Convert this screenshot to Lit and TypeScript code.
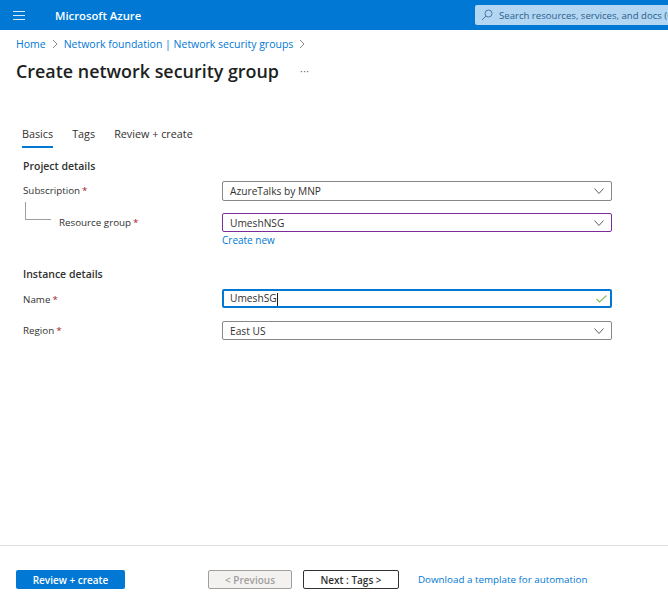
import { LitElement, html, css, svg } from 'lit';
import { customElement } from 'lit/decorators.js';

const chevronDown = svg`<path d="M.5 .5 L5 5.5 L9.5 .5" fill="none" stroke="#605e5c" stroke-width="1"/>`;
const crumbChevron = svg`<path d="M1 1 L5 5 L1 9" fill="none" stroke="#8a8886" stroke-width="1"/>`;

@customElement('app-root')
export class AppRoot extends LitElement {
    static styles = css`
        :host {
            display: flex;
            flex-direction: column;
            height: 600px;
            background: #fff;
            color: #323130;
            font-family: 'Open Sans', 'Noto Sans', sans-serif;
            font-size: 10.5px;
            overflow: hidden;
        }

        .topbar {
            display: flex;
            align-items: center;
            height: 30px;
            flex: none;
            background: #0078d4;
            color: #fff;
        }

        .menu {
            display: flex;
            margin-left: 13px;
            width: 12px;
        }

        .brand {
            margin-left: 30px;
            font-size: 11.3px;
            font-weight: 600;
            white-space: nowrap;
        }

        .search {
            display: flex;
            align-items: center;
            gap: 6px;
            margin-left: auto;
            width: 193px;
            height: 20px;
            padding-left: 6px;
            box-sizing: border-box;
            background: #b3d6f2;
            border-radius: 2px 0 0 2px;
            color: #2c5f8d;
            font-size: 9.6px;
            white-space: nowrap;
            overflow: hidden;
        }

        .search svg {
            flex: none;
        }

        .crumbs {
            display: flex;
            align-items: center;
            gap: 6px;
            margin: 6px 0 0 16px;
            height: 16px;
            color: #0078d4;
            white-space: nowrap;
        }

        .title-row {
            display: flex;
            align-items: center;
            margin: 6px 0 0 16px;
            height: 26px;
        }

        h1 {
            margin: 0;
            font-size: 17.9px;
            font-weight: 600;
            color: #201f1e;
            white-space: nowrap;
        }

        .more {
            margin-left: 21px;
            font-size: 10px;
            color: #605e5c;
            letter-spacing: 0.5px;
        }

        .tabs {
            display: flex;
            gap: 19px;
            margin: 43px 0 0 22px;
            height: 21px;
            font-size: 10.8px;
        }

        .tab {
            height: 19px;
            line-height: 14px;
            white-space: nowrap;
        }

        .tab.active {
            border-bottom: 2px solid #0078d4;
        }

        .form {
            flex: 1;
            margin-left: 23px;
            width: 589px;
        }

        h2 {
            margin: 0;
            font-size: 10.5px;
            font-weight: 600;
            line-height: 16px;
        }

        .section-one {
            margin-top: 10px;
        }

        .section-two {
            margin-top: 19px;
        }

        .row {
            display: grid;
            grid-template-columns: 199px 390px;
            align-items: center;
        }

        .row.first {
            margin-top: 7px;
        }

        .row.gap {
            margin-top: 12px;
        }

        .row.wide-gap {
            margin-top: 13px;
        }

        .label {
            display: flex;
            align-items: center;
            font-size: 9.8px;
            white-space: nowrap;
        }

        .label.raised {
            padding-bottom: 2px;
        }

        .label.lowered {
            padding-top: 2px;
        }

        .label b {
            margin-left: 2px;
            font-weight: 400;
            color: #a4262c;
        }

        .elbow {
            width: 26px;
            height: 18px;
            margin: -18px 8px 5px 2px;
            border-left: 1px solid #a19f9d;
            border-bottom: 1px solid #a19f9d;
            box-sizing: border-box;
        }

        .field {
            display: flex;
            align-items: center;
            justify-content: space-between;
            height: 19px;
            padding: 0 7px;
            box-sizing: border-box;
            border: 1px solid #8a8886;
            border-radius: 2px;
            background: #fff;
            font-size: 10.2px;
        }

        .field.tall {
            height: 20px;
        }

        .field.purple {
            border-color: #7b2e9b;
        }

        .field.focus {
            border: 2px solid #0078d4;
            padding: 0 3px 0 6px;
        }

        .caret {
            display: inline-block;
            width: 1px;
            height: 13px;
            background: #201f1e;
            vertical-align: middle;
        }

        .create {
            margin: 1px 0 0 199px;
            line-height: 14px;
            color: #0078d4;
            font-size: 10px;
        }

        .footer {
            display: flex;
            align-items: flex-start;
            flex: none;
            height: 55px;
            padding: 24px 0 0 16px;
            box-sizing: border-box;
            border-top: 1px solid #e1dfdd;
        }

        .btn {
            display: flex;
            align-items: center;
            justify-content: center;
            height: 19px;
            box-sizing: border-box;
            border-radius: 2px;
            white-space: nowrap;
            font-size: 10px;
            font-weight: 600;
        }

        .btn.primary {
            width: 109px;
            background: #0078d4;
            color: #fff;
        }

        .btn.disabled {
            width: 84px;
            margin-left: 83px;
            background: #f3f2f1;
            border: 1px solid #a19f9d;
            color: #a19f9d;
        }

        .btn.outline {
            width: 96px;
            margin-left: 11px;
            border: 1px solid #323130;
            color: #323130;
        }

        .link {
            margin-left: 19px;
            color: #0078d4;
            font-size: 9.8px;
            line-height: 19px;
            white-space: nowrap;
        }
    `;

    private _select(value: string, extra = '') {
        return html`
            <div class="field ${extra}">
                <span>${value}</span>
                <svg width="10" height="6" viewBox="0 0 10 6">${chevronDown}</svg>
            </div>
        `;
    }

    render() {
        return html`
            <header class="topbar">
                <div class="menu">
                    <svg width="12" height="9" viewBox="0 0 12 9">
                        <path d="M0 .5H12M0 4.5H12M0 8.5H12" stroke="#fff" stroke-width="1" opacity="0.85"/>
                    </svg>
                </div>
                <div class="brand">Microsoft Azure</div>
                <div class="search">
                    <svg width="12" height="12" viewBox="0 0 12 12">
                        <circle cx="7.5" cy="4.5" r="3.5" fill="none" stroke="#4a7ba6" stroke-width="1"/>
                        <path d="M5 7L1 11" stroke="#4a7ba6" stroke-width="1"/>
                    </svg>
                    <span>Search resources, services, and docs (G+/)</span>
                </div>
            </header>

            <nav class="crumbs">
                <span>Home</span>
                <svg width="6" height="10" viewBox="0 0 6 10">${crumbChevron}</svg>
                <span>Network foundation | Network security groups</span>
                <svg width="6" height="10" viewBox="0 0 6 10">${crumbChevron}</svg>
            </nav>

            <div class="title-row">
                <h1>Create network security group</h1>
                <span class="more">···</span>
            </div>

            <div class="tabs">
                <div class="tab active">Basics</div>
                <div class="tab">Tags</div>
                <div class="tab">Review + create</div>
            </div>

            <main class="form">
                <h2 class="section-one">Project details</h2>
                <div class="row first">
                    <div class="label raised">Subscription<b>*</b></div>
                    ${this._select('AzureTalks by MNP', 'tall')}
                </div>
                <div class="row gap">
                    <div class="label">
                        <div class="elbow"></div>
                        Resource group<b>*</b>
                    </div>
                    ${this._select('UmeshNSG', 'purple')}
                </div>
                <div class="create">Create new</div>

                <h2 class="section-two">Instance details</h2>
                <div class="row first">
                    <div class="label lowered">Name<b>*</b></div>
                    <div class="field focus">
                        <span>UmeshSG<i class="caret"></i></span>
                        <svg width="11" height="8" viewBox="0 0 11 8">
                            <path d="M.5 4L3.5 7L10.5 .5" fill="none" stroke="#86bc57" stroke-width="1.1"/>
                        </svg>
                    </div>
                </div>
                <div class="row wide-gap">
                    <div class="label">Region<b>*</b></div>
                    ${this._select('East US')}
                </div>
            </main>

            <footer class="footer">
                <div class="btn primary">Review + create</div>
                <div class="btn disabled">&lt; Previous</div>
                <div class="btn outline">Next : Tags &gt;</div>
                <div class="link">Download a template for automation</div>
            </footer>
        `;
    }
}
